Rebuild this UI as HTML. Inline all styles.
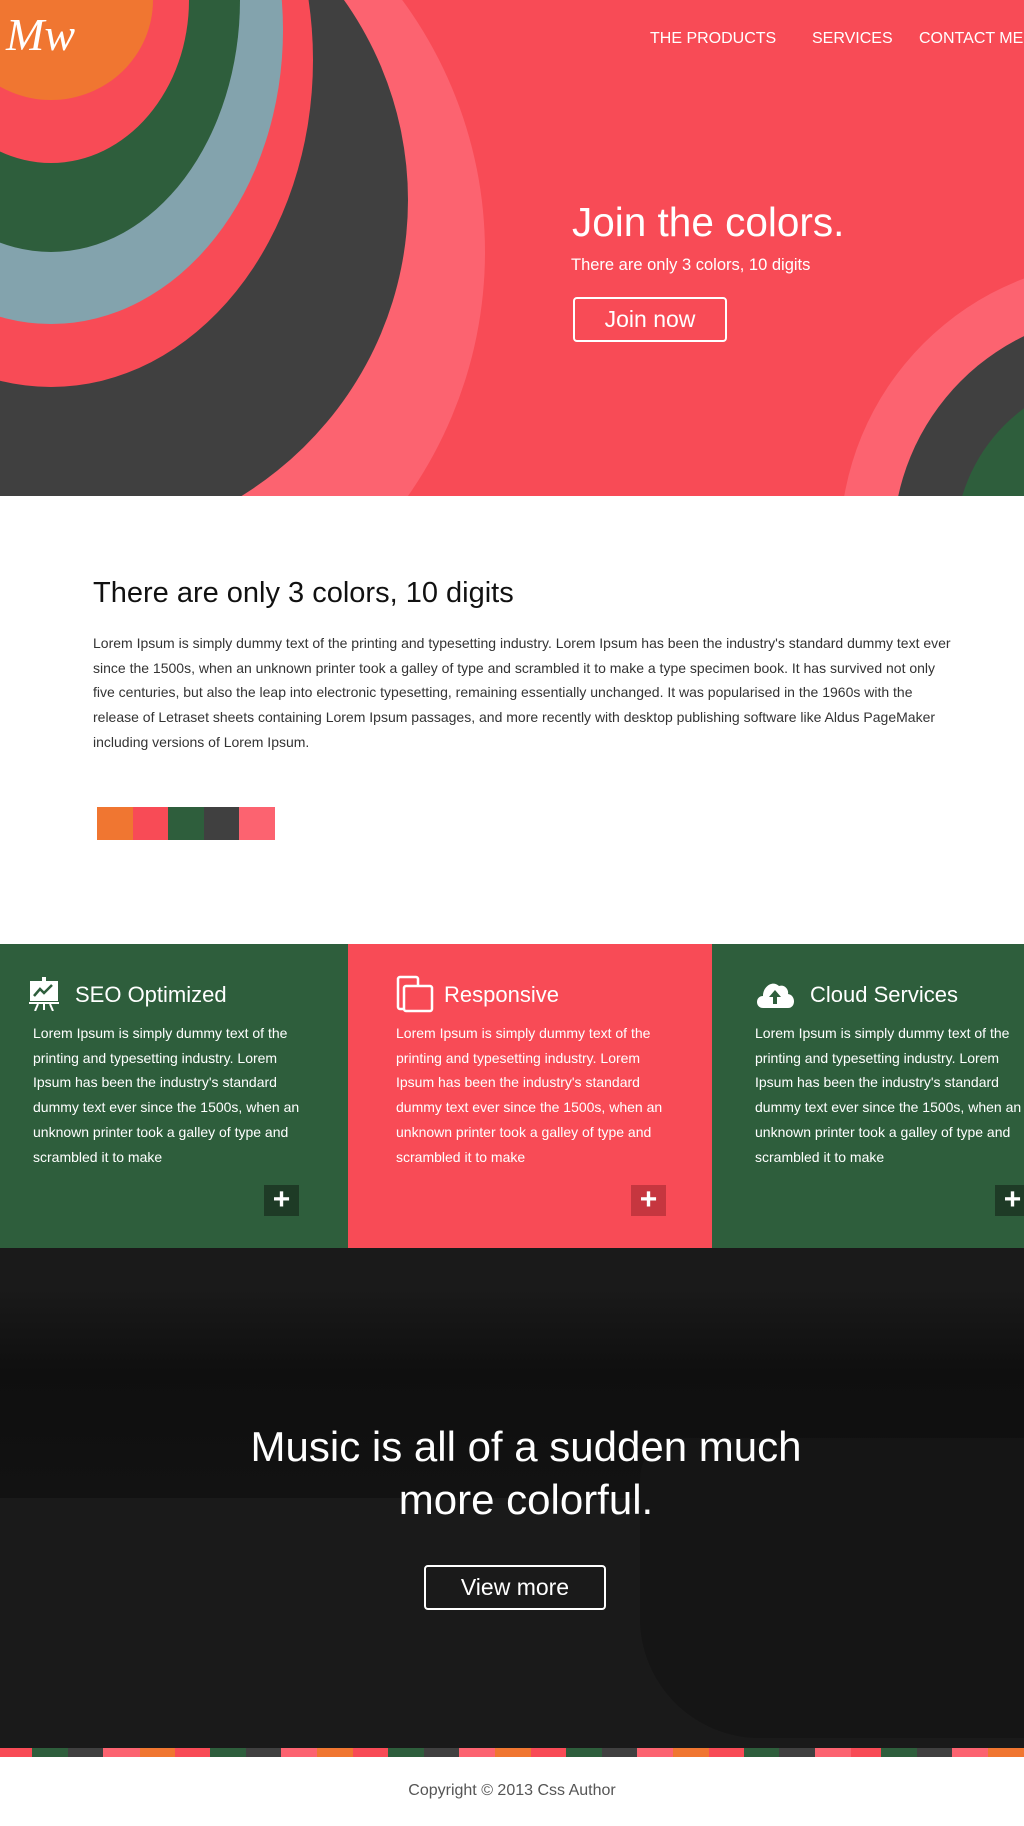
<!DOCTYPE html>
<html><head><meta charset="utf-8"><style>
*{margin:0;padding:0;box-sizing:border-box}
body{width:1024px;height:1826px;position:relative;font-family:"Liberation Sans",sans-serif;background:#fff;overflow:hidden}
.abs{position:absolute}
.hero{left:0;top:0;width:1024px;height:496px;background:#f84b56;overflow:hidden}
.nav{color:#fff;font-size:16px;top:30px;white-space:nowrap}
.btn{border:2px solid #fff;border-radius:4px;color:#fff;text-align:center}
.feat{top:944px;height:304px}
.ft{color:#fff;font-size:14px;line-height:24.7px;width:280px}
.plus{width:35px;height:31px;color:#fff;font-size:30px;line-height:30px;text-align:center;font-weight:bold}
.fh{color:#fff;font-size:22px;white-space:nowrap;top:982px}
</style></head><body>
<div class="abs hero">
<svg width="1024" height="496" style="position:absolute;left:0;top:0">
<ellipse cx="51" cy="252" rx="434" ry="429" fill="#fc6370"/>
<ellipse cx="51" cy="200" rx="357" ry="350" fill="#404040"/>
<ellipse cx="51" cy="60" rx="262" ry="327" fill="#f84b56"/>
<ellipse cx="51" cy="30" rx="232" ry="294" fill="#83a3ad"/>
<ellipse cx="51" cy="0" rx="189" ry="252" fill="#2e5e3c"/>
<ellipse cx="51" cy="0" rx="138" ry="163" fill="#f84b56"/>
<ellipse cx="51" cy="0" rx="102" ry="100" fill="#f07631"/>
<circle cx="1125" cy="545" r="285" fill="#fc6370"/>
<circle cx="1125" cy="545" r="232" fill="#404040"/>
<circle cx="1125" cy="545" r="170" fill="#2e5e3c"/>
<text x="6" y="50" font-family="Liberation Serif,serif" font-style="italic" font-size="46" fill="#fff">Mw</text>
</svg>
<div class="abs nav" style="left:650px">THE PRODUCTS</div>
<div class="abs nav" style="left:812px">SERVICES</div>
<div class="abs nav" style="left:919px">CONTACT ME</div>
<div class="abs" style="left:572px;top:199px;color:#fff;font-size:40.5px;white-space:nowrap">Join the colors.</div>
<div class="abs" style="left:571px;top:256px;color:#fff;font-size:16.5px;white-space:nowrap">There are only 3 colors, 10 digits</div>
<div class="abs btn" style="left:573px;top:297px;width:154px;height:45px;font-size:23px;line-height:40px">Join now</div>
</div>

<div class="abs" style="left:93px;top:577px;font-size:29px;color:#111;white-space:nowrap">There are only 3 colors, 10 digits</div>
<div class="abs" style="left:93px;top:631px;width:862px;font-size:14px;line-height:24.7px;color:#333">Lorem Ipsum is simply dummy text of the printing and typesetting industry. Lorem Ipsum has been the industry's standard dummy text ever since the 1500s, when an unknown printer took a galley of type and scrambled it to make a type specimen book. It has survived not only five centuries, but also the leap into electronic typesetting, remaining essentially unchanged. It was popularised in the 1960s with the release of Letraset sheets containing Lorem Ipsum passages, and more recently with desktop publishing software like Aldus PageMaker including versions of Lorem Ipsum.</div>
<div class="abs" style="left:97px;top:807px;height:33px;width:178px;display:flex">
<div style="flex:1;background:#f07631"></div><div style="flex:1;background:#f84b56"></div><div style="flex:1;background:#2e5e3c"></div><div style="flex:1;background:#404040"></div><div style="flex:1;background:#fc6370"></div></div>

<div class="abs feat" style="left:0;width:348px;background:#2e5e3c"></div>
<div class="abs feat" style="left:348px;width:364px;background:#f84b56"></div>
<div class="abs feat" style="left:712px;width:312px;background:#2e5e3c"></div>

<svg class="abs" style="left:29px;top:977px" width="30" height="34" viewBox="0 0 30 34"><rect x="13" y="0" width="4" height="4" fill="#fff"/><rect x="1" y="4" width="28" height="20" fill="#fff"/><path d="M5 19 L11 12 L15 16 L23 8" stroke="#2e5e3c" stroke-width="2.5" fill="none"/><rect x="0" y="25" width="30" height="2" fill="#fff"/><path d="M9 27 L6 34 M21 27 L24 34 M15 27 V33" stroke="#fff" stroke-width="2"/></svg>
<div class="abs fh" style="left:75px">SEO Optimized</div>
<svg class="abs" style="left:396px;top:975px" width="38" height="38" viewBox="0 0 38 38"><rect x="2" y="2" width="20" height="32" rx="2" stroke="#fff" stroke-width="2.5" fill="none"/><rect x="8" y="11" width="28" height="25" rx="2" stroke="#fff" stroke-width="2.5" fill="#f84b56"/></svg>
<div class="abs fh" style="left:444px">Responsive</div>
<svg class="abs" style="left:755px;top:978px" width="40" height="30" viewBox="0 0 40 30"><path d="M8 30 C0 30 0 18 8 18 C8 8 18 2 24 8 C30 6 34 12 33 16 C41 17 41 30 33 30 Z" fill="#fff"/><path d="M20 12 L14 19 H18 V26 H22 V19 H26 Z" fill="#2e5e3c"/></svg>
<div class="abs fh" style="left:810px">Cloud Services</div>

<div class="abs ft" style="left:33px;top:1021px">Lorem Ipsum is simply dummy text of the printing and typesetting industry. Lorem Ipsum has been the industry's standard dummy text ever since the 1500s, when an unknown printer took a galley of type and scrambled it to make</div>
<div class="abs ft" style="left:396px;top:1021px">Lorem Ipsum is simply dummy text of the printing and typesetting industry. Lorem Ipsum has been the industry's standard dummy text ever since the 1500s, when an unknown printer took a galley of type and scrambled it to make</div>
<div class="abs ft" style="left:755px;top:1021px">Lorem Ipsum is simply dummy text of the printing and typesetting industry. Lorem Ipsum has been the industry's standard dummy text ever since the 1500s, when an unknown printer took a galley of type and scrambled it to make</div>
<div class="abs plus" style="left:264px;top:1185px;background:#1e3b26">+</div>
<div class="abs plus" style="left:631px;top:1185px;background:#c6363f">+</div>
<div class="abs plus" style="left:995px;top:1185px;background:#1e3b26">+</div>

<div class="abs" style="left:0;top:1248px;width:1024px;height:500px;background:#1a1a1a;overflow:hidden">
<div class="abs" style="left:0;top:40px;width:1024px;height:210px;background:linear-gradient(#1a1a1a,#0f0f0f 40%,#121212)"></div>
<div class="abs" style="left:640px;top:190px;width:420px;height:300px;background:#151515;border-radius:40px 0 0 120px"></div>
<div class="abs" style="left:14px;top:0;width:1024px;text-align:center;color:#fff;font-size:42px;line-height:53px;padding-top:172px">Music is all of a sudden much<br>more colorful.</div>
<div class="abs btn" style="left:424px;top:317px;width:182px;height:45px;line-height:40px;font-size:23px">View more</div>
</div>

<div class="abs" style="left:0;top:1748px;width:1024px;height:9px;display:flex">
<div style="width:32px;background:#f84b56"></div><div style="width:36px;background:#2e5e3c"></div><div style="width:35px;background:#404040"></div><div style="width:37px;background:#fc6370"></div><div style="width:35px;background:#f07631"></div><div style="width:35px;background:#f84b56"></div><div style="width:36px;background:#2e5e3c"></div><div style="width:35px;background:#404040"></div><div style="width:36px;background:#fc6370"></div><div style="width:36px;background:#f07631"></div><div style="width:35px;background:#f84b56"></div><div style="width:36px;background:#2e5e3c"></div><div style="width:35px;background:#404040"></div><div style="width:36px;background:#fc6370"></div><div style="width:36px;background:#f07631"></div><div style="width:35px;background:#f84b56"></div><div style="width:36px;background:#2e5e3c"></div><div style="width:35px;background:#404040"></div><div style="width:36px;background:#fc6370"></div><div style="width:36px;background:#f07631"></div><div style="width:35px;background:#f84b56"></div><div style="width:35px;background:#2e5e3c"></div><div style="width:36px;background:#404040"></div><div style="width:36px;background:#fc6370"></div><div style="width:30px;background:#f84b56"></div><div style="width:36px;background:#2e5e3c"></div><div style="width:35px;background:#404040"></div><div style="width:36px;background:#fc6370"></div><div style="flex:1;background:#f07631"></div>
</div>
<div class="abs" style="left:0;top:1782px;width:1024px;text-align:center;color:#555;font-size:16px">Copyright © 2013 Css Author</div>
</body></html>
